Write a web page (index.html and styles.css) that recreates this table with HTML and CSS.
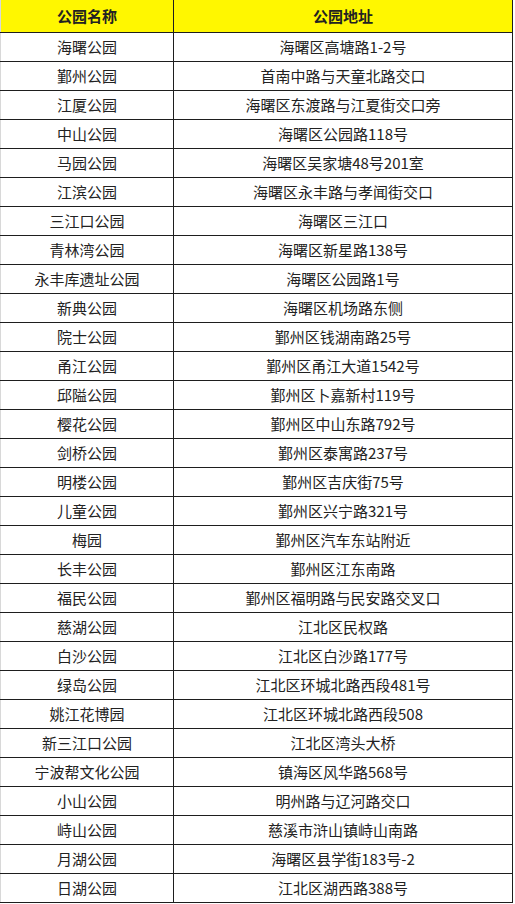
FILE: index.html
```html
<!DOCTYPE html>
<html lang="zh-CN">
<head>
<meta charset="utf-8">
<link rel="stylesheet" href="styles.css">
</head>
<body>
<table class="parks">
  <thead>
    <tr><th class="c-name">公园名称</th><th class="c-addr">公园地址</th></tr>
  </thead>
  <tbody>
    <tr><td>海曙公园</td><td>海曙区高塘路1-2号</td></tr>
    <tr><td>鄞州公园</td><td>首南中路与天童北路交口</td></tr>
    <tr><td>江厦公园</td><td>海曙区东渡路与江夏街交口旁</td></tr>
    <tr><td>中山公园</td><td>海曙区公园路118号</td></tr>
    <tr><td>马园公园</td><td>海曙区吴家塘48号201室</td></tr>
    <tr><td>江滨公园</td><td>海曙区永丰路与孝闻街交口</td></tr>
    <tr><td>三江口公园</td><td>海曙区三江口</td></tr>
    <tr><td>青林湾公园</td><td>海曙区新星路138号</td></tr>
    <tr><td>永丰库遗址公园</td><td>海曙区公园路1号</td></tr>
    <tr><td>新典公园</td><td>海曙区机场路东侧</td></tr>
    <tr><td>院士公园</td><td>鄞州区钱湖南路25号</td></tr>
    <tr><td>甬江公园</td><td>鄞州区甬江大道1542号</td></tr>
    <tr><td>邱隘公园</td><td>鄞州区卜嘉新村119号</td></tr>
    <tr><td>樱花公园</td><td>鄞州区中山东路792号</td></tr>
    <tr><td>剑桥公园</td><td>鄞州区泰寓路237号</td></tr>
    <tr><td>明楼公园</td><td>鄞州区吉庆街75号</td></tr>
    <tr><td>儿童公园</td><td>鄞州区兴宁路321号</td></tr>
    <tr><td>梅园</td><td>鄞州区汽车东站附近</td></tr>
    <tr><td>长丰公园</td><td>鄞州区江东南路</td></tr>
    <tr><td>福民公园</td><td>鄞州区福明路与民安路交叉口</td></tr>
    <tr><td>慈湖公园</td><td>江北区民权路</td></tr>
    <tr><td>白沙公园</td><td>江北区白沙路177号</td></tr>
    <tr><td>绿岛公园</td><td>江北区环城北路西段481号</td></tr>
    <tr><td>姚江花博园</td><td>江北区环城北路西段508</td></tr>
    <tr><td>新三江口公园</td><td>江北区湾头大桥</td></tr>
    <tr><td>宁波帮文化公园</td><td>镇海区风华路568号</td></tr>
    <tr><td>小山公园</td><td>明州路与辽河路交口</td></tr>
    <tr><td>峙山公园</td><td>慈溪市浒山镇峙山南路</td></tr>
    <tr><td>月湖公园</td><td>海曙区县学街183号-2</td></tr>
    <tr><td>日湖公园</td><td>江北区湖西路388号</td></tr>
  </tbody>
</table>
</body>
</html>
```
FILE: styles.css
```css
html, body {
  margin: 0;
  padding: 0;
  background: #ffffff;
}
body {
  font-family: "Noto Sans CJK SC", "Microsoft YaHei", sans-serif;
  color: #222222;
}
.parks {
  border-collapse: collapse;
  table-layout: fixed;
  width: 513px;
  font-size: 15px;
}
.parks th,
.parks td {
  padding: 0;
  text-align: center;
  white-space: nowrap;
  border-right: 1px solid #1e1e1e;
  border-bottom: 1px solid #1e1e1e;
  line-height: 20px;
}
.parks th {
  height: 32px;
  background: #fff700;
  font-weight: 700;
  font-size: 15px;
}
.parks td {
  height: 28px;
}
.parks th:first-child,
.parks td:first-child {
  border-left: 1px solid #d8d8d8;
}
.c-name {
  width: 172px;
}
.c-addr {
  width: 338px;
}
```
